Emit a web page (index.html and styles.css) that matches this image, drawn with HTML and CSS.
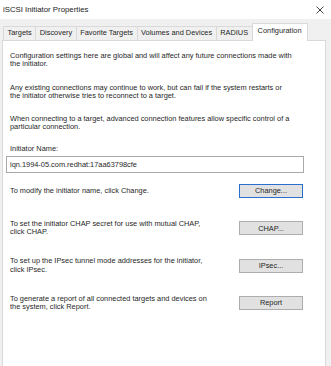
FILE: index.html
```html
<!DOCTYPE html>
<html lang="en">
<head>
    <meta charset="UTF-8">
    <meta name="viewport" content="width=device-width, initial-scale=1.0">
    <title>iSCSI Initiator Properties</title>
    <link rel="stylesheet" href="styles.css">
</head>
<body>
    <div class="dialog">
        <div class="titlebar">
            <span class="title">iSCSI Initiator Properties</span>
            <svg class="close" width="8" height="8" viewBox="0 0 8 8">
                <path d="M0.5 0.5 L7.5 7.5 M7.5 0.5 L0.5 7.5" stroke="#2b2b2b" stroke-width="0.9" fill="none"/>
            </svg>
        </div>
        <div class="tabs">
            <span class="tab">Targets</span>
            <span class="tab">Discovery</span>
            <span class="tab">Favorite Targets</span>
            <span class="tab">Volumes and Devices</span>
            <span class="tab">RADIUS</span>
            <span class="tab active">Configuration</span>
        </div>
        <div class="panel">
            <p class="note">Configuration settings here are global and will affect any future connections made with<br>the initiator.</p>
            <p class="note">Any existing connections may continue to work, but can fail if the system restarts or<br>the initiator otherwise tries to reconnect to a target.</p>
            <p class="note">When connecting to a target, advanced connection features allow specific control of a<br>particular connection.</p>

            <div class="field-label">Initiator Name:</div>
            <div class="field">iqn.1994-05.com.redhat:17aa63798cfe</div>

            <div class="action-row first">
                <p class="action-text">To modify the initiator name, click Change.</p>
                <button class="btn default">Change...</button>
            </div>
            <div class="action-row">
                <p class="action-text">To set the initiator CHAP secret for use with mutual CHAP,<br>click CHAP.</p>
                <button class="btn">CHAP...</button>
            </div>
            <div class="action-row">
                <p class="action-text">To set up the IPsec tunnel mode addresses for the initiator,<br>click IPsec.</p>
                <button class="btn">IPsec...</button>
            </div>
            <div class="action-row">
                <p class="action-text">To generate a report of all connected targets and devices on<br>the system, click Report.</p>
                <button class="btn">Report</button>
            </div>
        </div>
    </div>
</body>
</html>
```

FILE: styles.css
```css
* {
    margin: 0;
    padding: 0;
    box-sizing: border-box;
}
body {
    font-family: "Liberation Sans", Arial, sans-serif;
    font-size: 7.4px;
    color: #1f1f1f;
    background-color: #f0f0f0;
}
.dialog {
    width: 331px;
    height: 366px;
    overflow: hidden;
    background-color: #f0f0f0;
}

/* title bar */
.titlebar {
    height: 19px;
    background-color: #fff;
    display: flex;
    align-items: center;
    justify-content: space-between;
    padding: 0 7px 0 3px;
}
.title {
    font-size: 7.8px;
    color: #222;
}

/* tabs */
.tabs {
    height: 22px;
    margin: 0 5px 0 2px;
    padding-left: 1px;
    display: flex;
    align-items: flex-end;
    border-bottom: 1px solid #d9d9d9;
}
.tab {
    height: 14px;
    line-height: 12px;
    padding: 0 3.5px;
    margin-right: -1px;
    border: 1px solid #d9d9d9;
    border-bottom: none;
    background-color: #f0f0f0;
    white-space: nowrap;
}
.tab.active {
    height: 18px;
    line-height: 14px;
    margin-bottom: -1px;
    padding: 0 5px;
    background-color: #fff;
}

/* panel */
.panel {
    height: 340px;
    margin: 0 5px 0 2px;
    padding: 11px 21px 0 3px;
    background-color: #fff;
    border: 1px solid #d9d9d9;
    border-top: none;
}
.note {
    margin-left: 4px;
    line-height: 8.4px;
    margin-bottom: 14.7px;
    white-space: nowrap;
}
.field-label {
    margin: -1.7px 0 0 4px;
    line-height: 8.4px;
}
.field {
    height: 17px;
    margin-top: 2.6px;
    padding-left: 3px;
    line-height: 15px;
    border: 1px solid #a9a9a9;
    background-color: #fff;
}

.action-row {
    height: 14px;
    display: flex;
    justify-content: space-between;
    align-items: center;
    margin-top: 23.4px;
}
.action-row.first {
    margin-top: 11px;
}
.action-text {
    margin-left: 4px;
    line-height: 8.4px;
    white-space: nowrap;
}
.btn {
    width: 64px;
    height: 14px;
    margin-right: 1px;
    font-family: inherit;
    font-size: 7.4px;
    color: #1f1f1f;
    background-color: #e1e1e1;
    border: 1px solid #adadad;
}
.btn.default {
    border-color: #2a6fcf;
}
```
